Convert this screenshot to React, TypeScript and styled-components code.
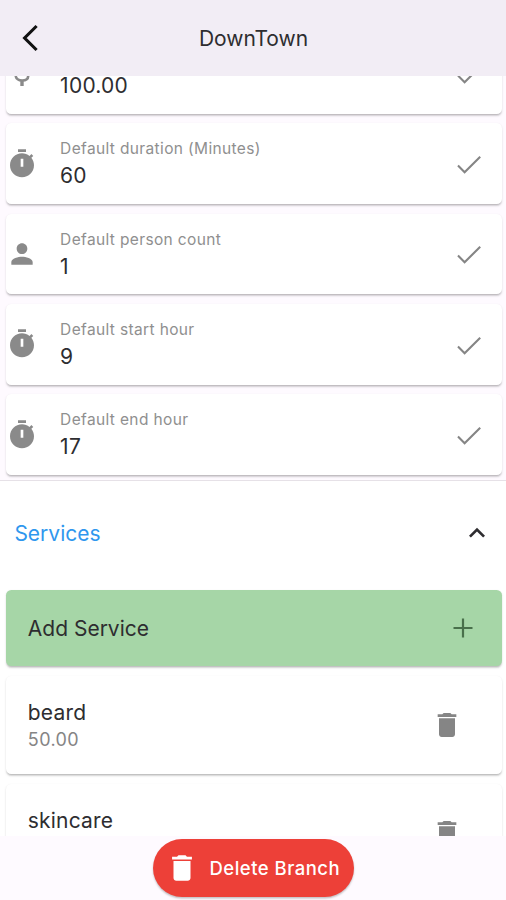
import React from "react";
import styled, { createGlobalStyle } from "styled-components";

const GlobalStyle = createGlobalStyle`
  *, *::before, *::after { box-sizing: border-box; }
  body { margin: 0; background: #fefaff; }
`;

const Screen = styled.div`
  display: flex;
  flex-direction: column;
  height: 900px;
  overflow: hidden;
  background: #fefaff;
  font-family: Inter, "Liberation Sans", sans-serif;
  font-size: 21px;
  color: #2e2d30;
`;

const Header = styled.header`
  flex: none;
  display: grid;
  grid-template-columns: 60px 1fr 59px;
  align-items: center;
  height: 76px;
  background: #f2edf5;
`;

const Title = styled.h1`
  margin: 0;
  padding-top: 1.5px;
  font-size: 21px;
  font-weight: 400;
  line-height: 28px;
  text-align: center;
`;

const BackButton = styled.button`
  display: flex;
  padding: 0 0 0 20px;
  border: 0;
  background: none;
  color: #111;
`;

const ScrollArea = styled.main`
  flex: 1;
  min-height: 0;
  overflow: hidden;
`;

const FieldList = styled.section`
  display: flex;
  flex-direction: column;
  gap: 9.8px;
  margin-top: -43.1px;
  padding: 0 4px 5.4px 5.5px;
`;

const Card = styled.div<{ $height: number; $tone?: string }>`
  display: flex;
  align-items: center;
  flex: none;
  height: ${(p) => p.$height}px;
  border-radius: 5.3px;
  background: ${(p) => p.$tone ?? "#fff"};
  box-shadow: 0 1.3px 1.3px rgba(0, 0, 0, 0.1), 0 1.3px 3px rgba(0, 0, 0, 0.08),
    0 1.5px 1px -1px rgba(0, 0, 0, 0.1);
`;

const LeadingIcon = styled.span`
  display: flex;
  width: 54.6px;
  color: #8a8a8a;
`;

const FieldText = styled.div`
  flex: 1;
  display: flex;
  flex-direction: column;
  height: 100%;
  padding-top: 16px;
`;

const Label = styled.span`
  height: 20px;
  font-size: 15.5px;
  line-height: 20px;
  letter-spacing: 0.36px;
  color: #8f8f8f;
`;

const Value = styled.span`
  line-height: 33px;
  letter-spacing: 0.25px;
`;

const TrailingIcon = styled.span<{ $right: number; $drop?: number }>`
  display: flex;
  margin-right: ${(p) => p.$right}px;
  padding-top: ${(p) => p.$drop ?? 0}px;
  color: #858585;
`;

const ServicesSection = styled.section`
  border-top: 1.5px solid #e6e1e7;
  background: #fff;
`;

const SectionHeader = styled.div`
  display: flex;
  align-items: center;
  justify-content: space-between;
  height: 104px;
  padding: 0 13px 0 14.4px;
`;

const SectionTitle = styled.h2`
  margin: 0;
  padding-top: 1.5px;
  font-size: 21px;
  font-weight: 400;
  line-height: 28px;
  color: #2f97ee;
`;

const ServiceList = styled.div`
  display: flex;
  flex-direction: column;
  gap: 9.8px;
  padding: 5px 4px 0 5.5px;
`;

const ServiceText = styled.div`
  flex: 1;
  display: flex;
  flex-direction: column;
  padding-left: 22.3px;
`;

const ServiceName = styled.span<{ $spacing?: number }>`
  line-height: 29px;
  letter-spacing: ${(p) => p.$spacing ?? 0}px;
`;

const Price = styled.span`
  height: 25px;
  font-size: 18px;
  line-height: 25px;
  letter-spacing: 0.4px;
  color: #858585;
`;

const Footer = styled.footer`
  flex: none;
  display: flex;
  justify-content: center;
  height: 64px;
  padding-top: 3px;
`;

const DeleteButton = styled.button`
  display: flex;
  align-items: center;
  gap: 10.5px;
  width: 201px;
  height: 58px;
  padding: 0 0 0 12.5px;
  border: 0;
  border-radius: 29px;
  background: #ed4038;
  box-shadow: 0 1.5px 2px rgba(0, 0, 0, 0.24);
  color: #fff;
  font-family: inherit;
  font-size: 18.5px;
  font-weight: 500;
  letter-spacing: 0.48px;
  white-space: nowrap;
`;

const paths = {
  timer:
    "M15 1H9v2h6V1zm-4 13h2V8h-2v6zm8.03-6.61l1.42-1.42c-.43-.51-.9-.99-1.41-1.41l-1.42 1.42C16.07 4.74 14.12 4 12 4c-4.97 0-9 4.03-9 9s4.02 9 9 9 9-4.03 9-9c0-2.12-.74-4.07-1.97-5.61z",
  person:
    "M12 12c2.21 0 4-1.79 4-4s-1.79-4-4-4-4 1.79-4 4 1.79 4 4 4zm0 2c-2.67 0-8 1.34-8 4v2h16v-2c0-2.66-5.33-4-8-4z",
  trash: "M6 19c0 1.1.9 2 2 2h8c1.1 0 2-.9 2-2V7H6v12zM19 4h-3.5l-1-1h-5l-1 1H5v2h14V4z",
  expandLess: "M12 8l-6 6 1.41 1.41L12 10.83l4.59 4.58L18 14z",
};

type GlyphName = keyof typeof paths;

const Glyph = ({ name, size = 32 }: { name: GlyphName; size?: number }) => (
  <svg width={size} height={size} viewBox="0 0 24 24" fill="currentColor" fillRule="evenodd">
    <path d={paths[name]} />
  </svg>
);

const MoneyGlyph = () => (
  <svg width="32" height="32" viewBox="0 0 32 32" fill="none" stroke="currentColor" strokeWidth="2.6">
    <path d="M22 8.5C21 5.5 18.500 4.500 16 4.500c-3.500 0-6 1.700-6 4.700 0 6.500 12.200 4 12.200 10.600 0 3-2.500 4.700-6.100 4.700-3.600 0-5.800-1.700-6.500-4.500" transform="translate(0 -1)" />
    <path d="M16 0v3.500M16 23v6" strokeWidth="3.400" />
  </svg>
);

const CheckGlyph = () => (
  <svg width="26" height="20" viewBox="0 0 26 20" fill="none" stroke="currentColor" strokeWidth="2.1">
    <path d="M2 10.6 8.6 17.2 24.2 1.8" />
  </svg>
);

const PlusGlyph = () => (
  <svg width="20" height="20" viewBox="0 0 20 20" fill="none" stroke="#49704b" strokeWidth="2.2">
    <path d="M10 .5v19M.5 10h19" />
  </svg>
);

const BackGlyph = () => (
  <svg width="20" height="28" viewBox="0 0 20 28" fill="none" stroke="currentColor" strokeWidth="3.1">
    <path d="M16.6 2 4.6 14l12 12" />
  </svg>
);

const fields: { icon: GlyphName | "money"; label?: string; value: string }[] = [
  { icon: "money", value: "100.00" },
  { icon: "timer", label: "Default duration (Minutes)", value: "60" },
  { icon: "person", label: "Default person count", value: "1" },
  { icon: "timer", label: "Default start hour", value: "9" },
  { icon: "timer", label: "Default end hour", value: "17" },
];

const services: { name: string; price?: string }[] = [
  { name: "beard", price: "50.00" },
  { name: "skincare" },
];

export default function App() {
  return (
    <Screen>
      <GlobalStyle />
      <Header>
        <BackButton aria-label="Back">
          <BackGlyph />
        </BackButton>
        <Title>DownTown</Title>
      </Header>
      <ScrollArea>
        <FieldList>
          {fields.map((field) => (
            <Card key={field.value} $height={80.6}>
              <LeadingIcon>
                {field.icon === "money" ? <MoneyGlyph /> : <Glyph name={field.icon} />}
              </LeadingIcon>
              <FieldText>
                <Label>{field.label}</Label>
                <Value>{field.value}</Value>
              </FieldText>
              <TrailingIcon $right={20} $drop={2.6}>
                <CheckGlyph />
              </TrailingIcon>
            </Card>
          ))}
        </FieldList>
        <ServicesSection>
          <SectionHeader>
            <SectionTitle>Services</SectionTitle>
            <Glyph name="expandLess" />
          </SectionHeader>
          <ServiceList>
            <Card $height={76} $tone="#a6d6a7">
              <ServiceText>
                <ServiceName>Add Service</ServiceName>
              </ServiceText>
              <TrailingIcon $right={29}>
                <PlusGlyph />
              </TrailingIcon>
            </Card>
            {services.map((service) => (
              <Card key={service.name} $height={97.8}>
                <ServiceText>
                  <ServiceName $spacing={0.2}>{service.name}</ServiceName>
                  <Price>{service.price}</Price>
                </ServiceText>
                <TrailingIcon $right={39}>
                  <Glyph name="trash" />
                </TrailingIcon>
              </Card>
            ))}
          </ServiceList>
        </ServicesSection>
      </ScrollArea>
      <Footer>
        <DeleteButton>
          <Glyph name="trash" size={34} />
          Delete Branch
        </DeleteButton>
      </Footer>
    </Screen>
  );
}
